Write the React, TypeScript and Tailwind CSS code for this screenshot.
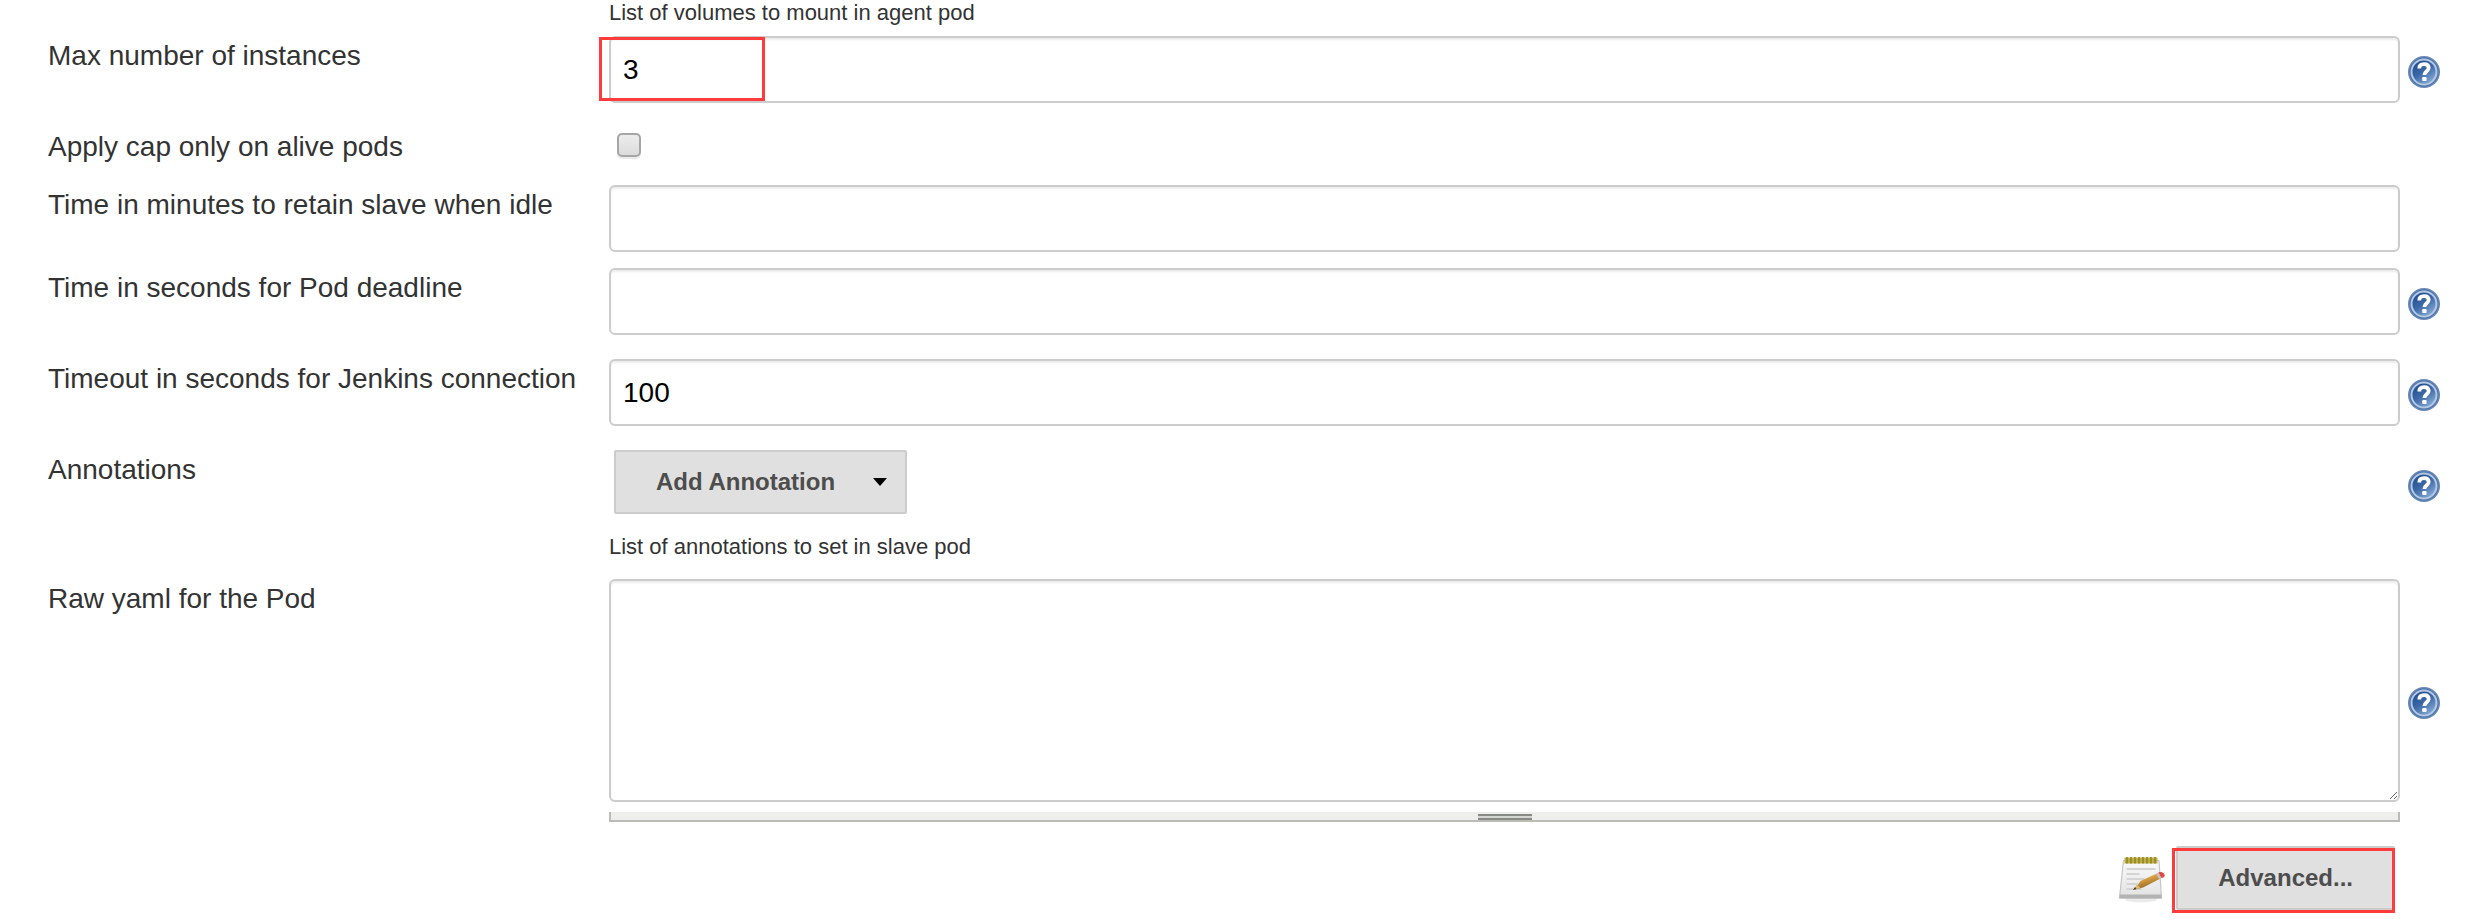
import { useState, type ReactNode } from "react"
import { clsx } from "clsx"

const inputClass =
  "block w-full rounded-md border-2 border-[#ccc] bg-white text-[28px] text-black shadow-[inset_0_2px_2px_rgba(0,0,0,0.075)] outline-none focus:border-[#5cb3fd]"

const buttonClass =
  "flex h-16 items-center rounded-[2px] border-2 border-[#ccc] bg-[#e0e0e0] text-2xl font-bold text-[#4d4d4d]"

function HelpIcon() {
  return (
    <svg viewBox="0 0 32 32" className="size-8" aria-hidden="true">
      <defs>
        <linearGradient id="help-face" x1="0.1" y1="0" x2="0.8" y2="1">
          <stop offset="0" stopColor="#1d4788" />
          <stop offset="0.5" stopColor="#3d69a8" />
          <stop offset="1" stopColor="#8fb3dc" />
        </linearGradient>
      </defs>
      <circle cx="16" cy="16" r="16" fill="#6788b6" />
      <circle cx="16" cy="16" r="14.5" fill="#4a72ab" />
      <circle cx="16" cy="16" r="12.5" fill="url(#help-face)" stroke="#b4c8e2" strokeWidth="2" />
      <path
        d="M11.3 12.4c0-2.800 1.900-4.200 4.700-4.200s4.700 1.300 4.700 3.700c0 3.200-4.300 3.400-4.300 7"
        fill="none"
        stroke="#fff"
        strokeWidth="3.800"
      />
      <rect x="14.200" y="21" width="4.400" height="4" rx="1" fill="#fff" />
    </svg>
  )
}

function NotepadIcon() {
  return (
    <svg viewBox="0 0 48 48" className="size-12" aria-hidden="true">
      <defs>
        <linearGradient id="pad-paper" x1="0" y1="0" x2="0" y2="1">
          <stop offset="0" stopColor="#fafafa" />
          <stop offset="1" stopColor="#e2e2e2" />
        </linearGradient>
        <linearGradient id="pencil-body" x1="0" y1="0" x2="0.4" y2="1">
          <stop offset="0" stopColor="#f0c06a" />
          <stop offset="0.5" stopColor="#d39a3f" />
          <stop offset="1" stopColor="#8f6222" />
        </linearGradient>
      </defs>
      <ellipse cx="23" cy="43.500" rx="16" ry="3" fill="#000" opacity="0.08" />
      <path d="M5.500 4.500h35.500l2.500 37.500h-42z" fill="url(#pad-paper)" stroke="#c6c6c6" strokeWidth="1.200" />
      <path d="M1.800 38.500h41.500l.2 4H1.400z" fill="#b3b3b3" />
      <path d="M6.500 1.500h33v6h-33z" fill="#bcae4c" />
      <path
        d="M9 1v6.500M13 1v6.500M17 1v6.500M21 1v6.500M25 1v6.500M29 1v6.500M33 1v6.500M37 1v6.500"
        stroke="#94851f"
        strokeWidth="1.600"
      />
      <path d="M8.500 13h29M8.500 18h13M8.500 23h18M8.500 28h12M8.500 33h15" stroke="#d4d4d4" strokeWidth="2" />
      <path d="M17 33.500l5.500-8.500 17.500-8 2.500 5.500-17.500 9z" fill="url(#pencil-body)" />
      <path d="M15 34l4-5.500 3.500 3.500z" fill="#d9b878" />
      <path d="M15 34l2-3 1.500 2z" fill="#4c3c1c" />
      <path d="M38 17.600l3-1.200 2.800 5.200-2.800 1.400z" fill="#c4c4c4" />
      <path d="M40.500 16.400c3-1.300 6 .4 6.200 3 .1 1.600-1.600 2.400-3.100 2.600z" fill="#df4a45" />
    </svg>
  )
}

function HelpButton({ name }: { name: string }) {
  return (
    <button type="button" aria-label={`Help for ${name}`} className="block size-8 rounded-full">
      <HelpIcon />
    </button>
  )
}

type RowProps = {
  label: string
  htmlFor?: string
  help?: "top" | "middle"
  className?: string
  children: ReactNode
}

function Row({ label, htmlFor, help, className, children }: RowProps) {
  return (
    <div className={clsx("grid grid-cols-[561px_minmax(0,1fr)_73px]", className)}>
      <label htmlFor={htmlFor} className="text-[28px] leading-10">
        {label}
      </label>
      <div>{children}</div>
      <div className={clsx("pl-2", help === "middle" ? "self-center pt-1" : "pt-5")}>
        {help && <HelpButton name={label} />}
      </div>
    </div>
  )
}

function Highlight({ className }: { className: string }) {
  return <div className={clsx("pointer-events-none absolute border-3 border-[#ff3b3b]", className)} />
}

export default function App() {
  const [maxInstances, setMaxInstances] = useState("3")
  const [timeout, setTimeoutValue] = useState("100")

  return (
    <form className="bg-white pb-2 pl-12 font-['Liberation_Sans',Arial,sans-serif] text-[#333]">
      <p className="ml-[561px] pb-2.5 text-[22px] leading-[26px]">List of volumes to mount in agent pod</p>

      <Row label="Max number of instances" htmlFor="max-instances" help="top" className="pb-6">
        <div className="relative">
          <input
            id="max-instances"
            value={maxInstances}
            onChange={(e) => setMaxInstances(e.target.value)}
            className={clsx(inputClass, "h-[67px] px-3")}
          />
          <Highlight className="-left-2.5 top-px h-16 w-[166px]" />
        </div>
      </Row>

      <Row label="Apply cap only on alive pods" htmlFor="alive-cap" className="pb-[18px]">
        <input
          id="alive-cap"
          type="checkbox"
          className="mt-1.5 ml-2 block size-6 appearance-none rounded-[5px] border-2 border-[#a6a6a6] bg-linear-to-b from-[#ececec] to-[#dcdcdc] shadow-[0_2px_0_rgba(0,0,0,0.08)] checked:bg-[#5c8fd6]"
        />
      </Row>

      <Row label="Time in minutes to retain slave when idle" htmlFor="idle-minutes" className="pb-4">
        <input id="idle-minutes" className={clsx(inputClass, "h-[67px] px-3")} />
      </Row>

      <Row label="Time in seconds for Pod deadline" htmlFor="deadline" help="top" className="pb-6">
        <input id="deadline" className={clsx(inputClass, "h-[67px] px-3")} />
      </Row>

      <Row label="Timeout in seconds for Jenkins connection" htmlFor="timeout" help="top" className="pb-6">
        <input
          id="timeout"
          value={timeout}
          onChange={(e) => setTimeoutValue(e.target.value)}
          className={clsx(inputClass, "h-[67px] px-3")}
        />
      </Row>

      <Row label="Annotations" htmlFor="add-annotation" help="top" className="pb-[19px]">
        <button id="add-annotation" type="button" className={clsx(buttonClass, "ml-[5px] gap-[38px] pr-[18px] pl-10")}>
          Add Annotation
          <svg viewBox="0 0 14 8" className="h-2 w-3.5" aria-hidden="true">
            <path d="M0 0h14L7 8z" fill="#000" />
          </svg>
        </button>
        <p className="mt-5 text-[22px] leading-[26px]">List of annotations to set in slave pod</p>
      </Row>

      <Row label="Raw yaml for the Pod" htmlFor="raw-yaml" help="middle" className="pb-6">
        <textarea id="raw-yaml" className={clsx(inputClass, "h-[223px] resize-y px-3 py-2")} />
        <div className="mt-2.5 flex h-2.5 items-end justify-center border-x-2 border-b-2 border-[#babdb6] bg-[#eeeeec]">
          <div className="h-1.5 w-[54px] border-y-2 border-[#888a85] bg-[#d3d7cf]" />
        </div>
      </Row>

      <div className="flex items-center justify-end gap-2.5 pr-[78px]">
        <div className="pt-1">
          <NotepadIcon />
        </div>
        <div className="relative">
          <button type="button" className={clsx(buttonClass, "px-10")}>
            Advanced...
          </button>
          <Highlight className="top-0.5 right-0 -left-1 h-[65px]" />
        </div>
      </div>
    </form>
  )
}
